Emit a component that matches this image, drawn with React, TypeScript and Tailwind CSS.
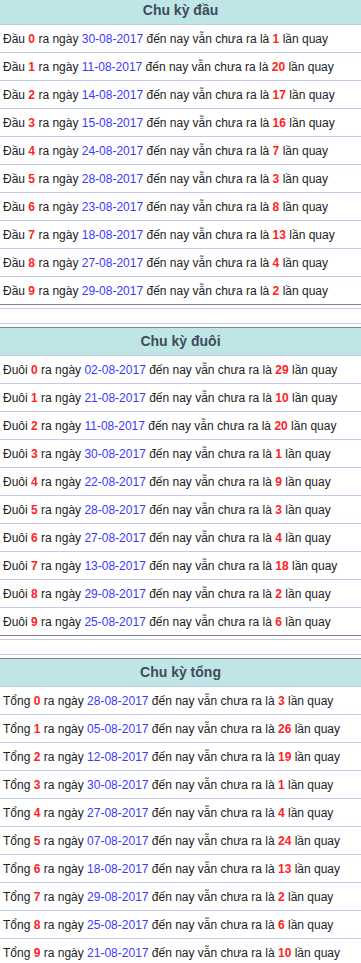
import React from "react";

type Row = { n: number; date: string; count: number };

const sections: { title: string; label: string; rows: Row[] }[] = [
  {
    title: "Chu kỳ đầu",
    label: "Đầu",
    rows: [
      { n: 0, date: "30-08-2017", count: 1 },
      { n: 1, date: "11-08-2017", count: 20 },
      { n: 2, date: "14-08-2017", count: 17 },
      { n: 3, date: "15-08-2017", count: 16 },
      { n: 4, date: "24-08-2017", count: 7 },
      { n: 5, date: "28-08-2017", count: 3 },
      { n: 6, date: "23-08-2017", count: 8 },
      { n: 7, date: "18-08-2017", count: 13 },
      { n: 8, date: "27-08-2017", count: 4 },
      { n: 9, date: "29-08-2017", count: 2 },
    ],
  },
  {
    title: "Chu kỳ đuôi",
    label: "Đuôi",
    rows: [
      { n: 0, date: "02-08-2017", count: 29 },
      { n: 1, date: "21-08-2017", count: 10 },
      { n: 2, date: "11-08-2017", count: 20 },
      { n: 3, date: "30-08-2017", count: 1 },
      { n: 4, date: "22-08-2017", count: 9 },
      { n: 5, date: "28-08-2017", count: 3 },
      { n: 6, date: "27-08-2017", count: 4 },
      { n: 7, date: "13-08-2017", count: 18 },
      { n: 8, date: "29-08-2017", count: 2 },
      { n: 9, date: "25-08-2017", count: 6 },
    ],
  },
  {
    title: "Chu kỳ tổng",
    label: "Tổng",
    rows: [
      { n: 0, date: "28-08-2017", count: 3 },
      { n: 1, date: "05-08-2017", count: 26 },
      { n: 2, date: "12-08-2017", count: 19 },
      { n: 3, date: "30-08-2017", count: 1 },
      { n: 4, date: "27-08-2017", count: 4 },
      { n: 5, date: "07-08-2017", count: 24 },
      { n: 6, date: "18-08-2017", count: 13 },
      { n: 7, date: "29-08-2017", count: 2 },
      { n: 8, date: "25-08-2017", count: 6 },
      { n: 9, date: "21-08-2017", count: 10 },
    ],
  },
];

export default function App() {
  return (
    <div
      className="w-[361px] overflow-hidden bg-white text-[12px] text-[#222]"
      style={{ fontFamily: '"Liberation Sans", Arial, sans-serif' }}
    >
      <div className="-mt-[4px]">
        {sections.map((s, si) => (
          <div key={s.title}>
            {si > 0 && (
              <div>
                <div className="h-[3px]" />
                <div className="h-px bg-[#c3c9ea]" />
                <div className="h-[14px]" />
                <div className="h-px bg-[#c3c9ea]" />
                <div className="h-[3px]" />
              </div>
            )}
            <div className="border-t border-[#7d8593] bg-[#bfe6e4] h-[29px] flex items-center justify-center border-b border-b-[#c3c9ea]">
              <span className="font-bold text-[#3f4b5e] text-[14px]">{s.title}</span>
            </div>
            {s.rows.map((r, i) => (
              <div
                key={r.n}
                className={
                  "h-[28px] flex items-center pl-[3px] whitespace-nowrap border-b " +
                  (i === s.rows.length - 1 ? "border-[#7d8593]" : "border-[#c3c9ea]")
                }
              >
                <span>
                  {s.label} <b className="text-[#ff2222]">{r.n}</b> ra ngày{" "}
                  <span className="text-[#3a3aff]">{r.date}</span> đến nay vẫn chưa ra là{" "}
                  <b className="text-[#ff2222]">{r.count}</b> lần quay
                </span>
              </div>
            ))}
          </div>
        ))}
      </div>
    </div>
  );
}
